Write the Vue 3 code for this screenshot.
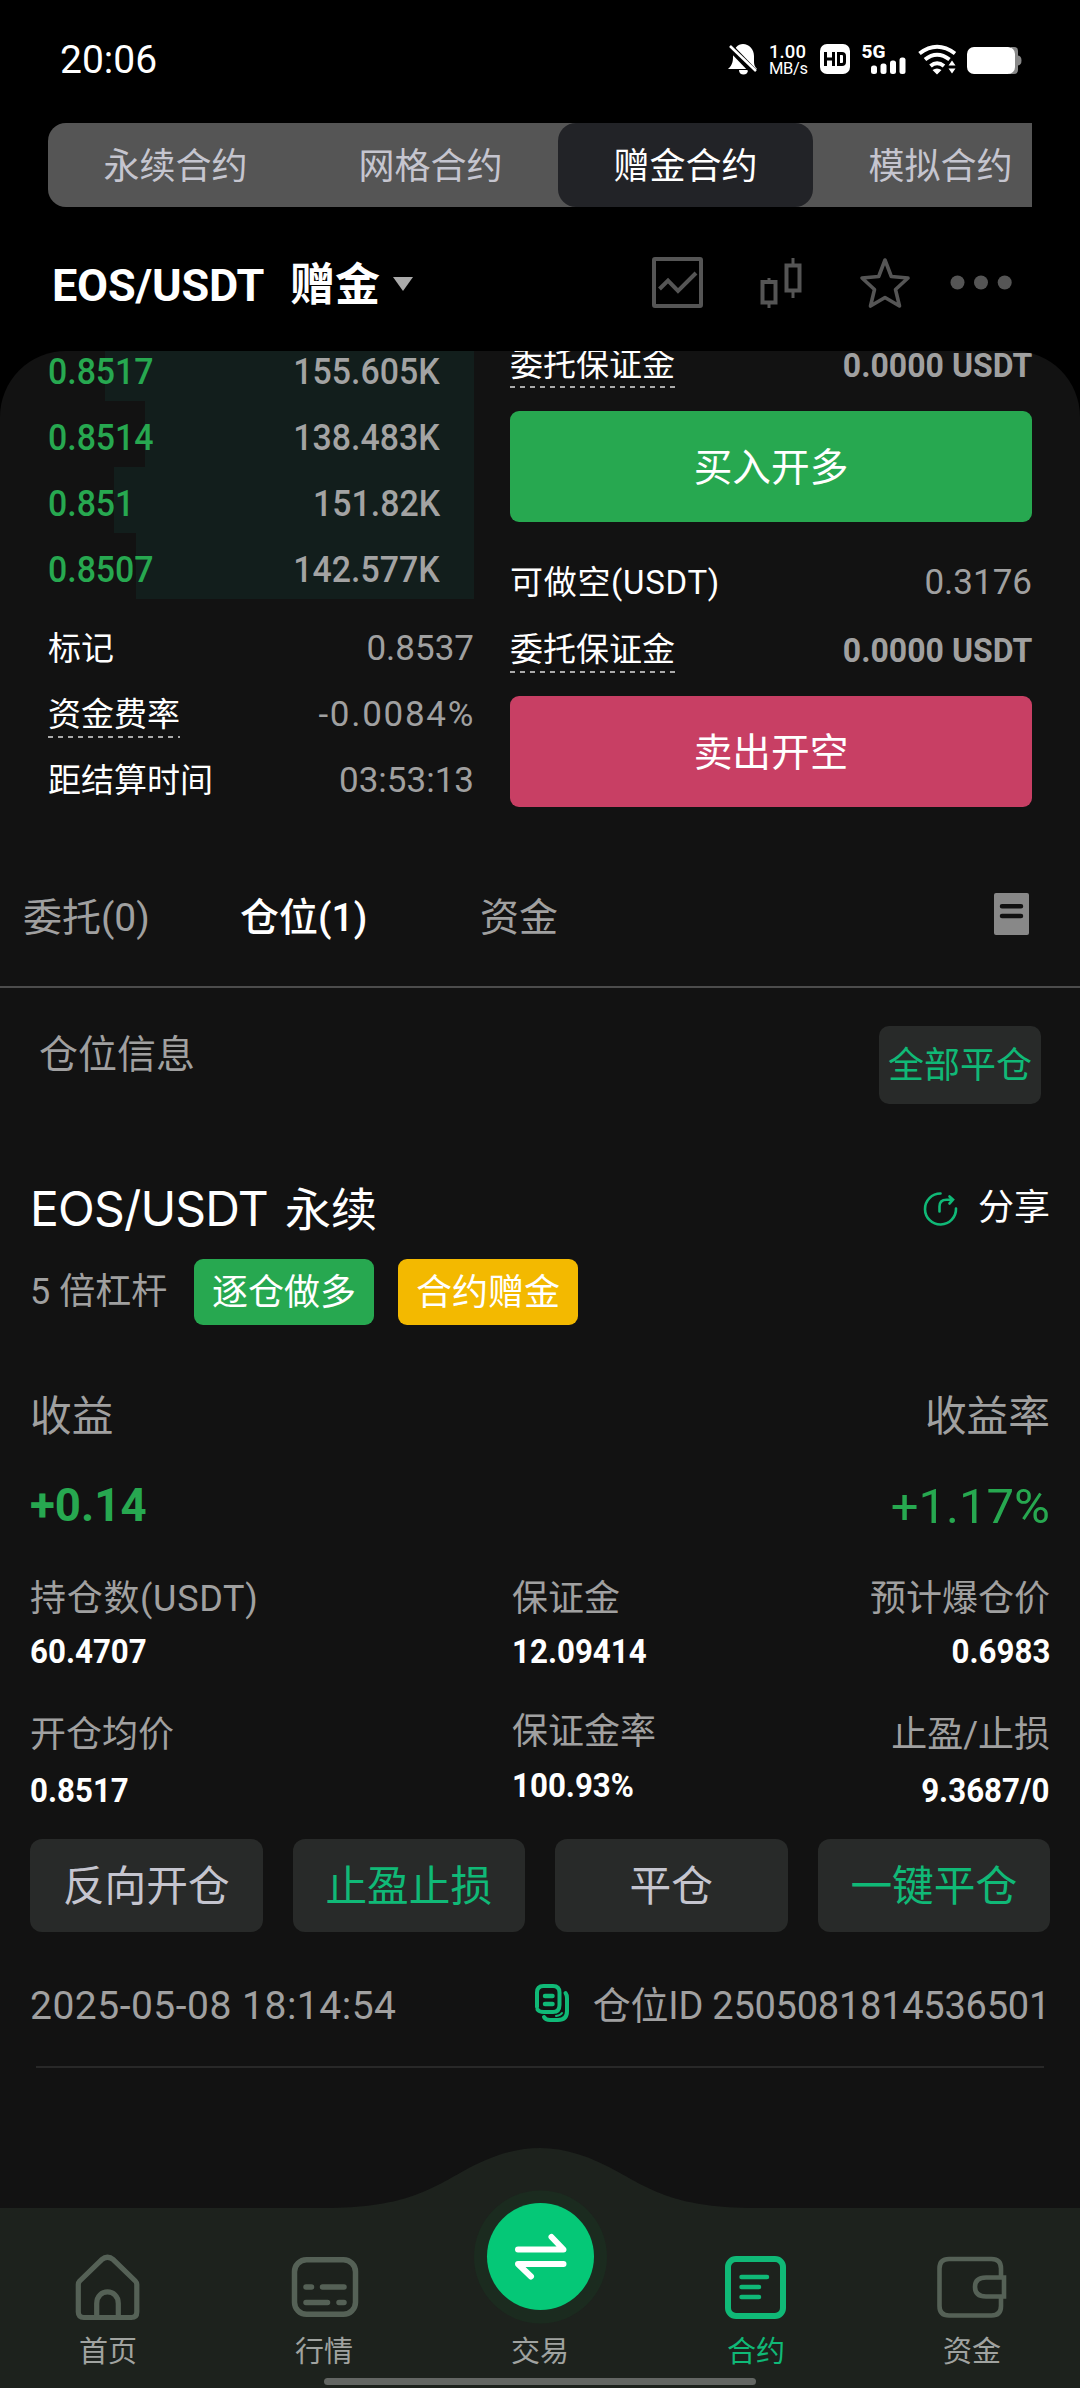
<script setup>
const modes = ['永续合约', '网格合约', '赠金合约', '模拟合约']

const bids = [
  { price: '0.8517', amount: '155.605K', depth: 369 },
  { price: '0.8514', amount: '138.483K', depth: 329 },
  { price: '0.851', amount: '151.82K', depth: 360 },
  { price: '0.8507', amount: '142.577K', depth: 338 },
]

const actions = [
  { label: '反向开仓', accent: false },
  { label: '止盈止损', accent: true },
  { label: '平仓', accent: false },
  { label: '一键平仓', accent: true },
]
</script>

<template>
  <div class="screen">
    <header class="status">
      <span class="clock">20:06</span>
      <svg class="status-icons" width="300" height="40" viewBox="0 0 300 40" fill="#fff">
        <path d="M4 27 C6 24 7 22 7 17 C7 8 12 4 17 4 C23 4 28 9 28 16 L28 22 C28 25 29 27 31 29 L2 29 Z M13 30 H22 C22 33 20 34.500 17.500 34.500 C15 34.500 13 33 13 30 Z" />
        <path d="M2 5 L29 33" stroke="#000" stroke-width="7" />
        <path d="M4 6 L30 31" stroke="#fff" stroke-width="2.600" />
        <text x="43" y="17.500" font-size="18.500" font-weight="500" textLength="37">1.00</text>
        <text x="43" y="34" font-size="16.500" textLength="39">MB/s</text>
        <rect x="94" y="4" width="30" height="30" rx="7" />
        <path d="M99.500 12 V26 M107.500 12 V26 M99.500 19 H107.500 M112.500 13.500 V24.500 H116 Q118.500 24.500 118.500 22 V16 Q118.500 13.500 116 13.500 Z" fill="none" stroke="#000" stroke-width="3" />
        <text x="135.500" y="18" font-size="19" font-weight="800" textLength="24">5G</text>
        <rect x="145" y="25.500" width="6" height="8.500" rx="2.500" />
        <rect x="154.500" y="23.500" width="6" height="10.500" rx="2.500" />
        <rect x="164" y="20.500" width="6" height="13.500" rx="2.500" />
        <rect x="173.500" y="17.500" width="6" height="16.500" rx="2.500" />
        <g fill="none" stroke="#fff" stroke-width="4">
          <path d="M193.500 13.500 Q211 0 229 13.500" />
          <path d="M199 19.500 Q211 10 223.500 19.500" />
          <path d="M204.500 26 Q211 20.500 218 26" />
        </g>
        <path d="M206.500 30 Q211 27 215.500 30 L211 34.500 Z M226 20.500 L229.500 25.500 H222.500 Z M226 33.500 L229.500 28.500 H222.500 Z" />
        <path d="M285 7 h3 q4 0 4 4 v4.500 q3.500 .5 3.500 5 t-3.500 5 V30 q0 4-4 4 h-5 Z" fill="#888" />
        <rect x="241" y="7" width="48" height="27" rx="7" />
      </svg>
    </header>

    <nav class="modes">
      <span v-for="(m, i) in modes" :key="m" class="mode" :class="{ on: i === 2 }">{{ m }}</span>
    </nav>

    <div class="pair">
      <span class="pair-name">EOS/USDT</span>
      <b class="pair-tag">赠金</b>
      <i class="caret"></i>
      <svg class="tools" width="364" height="54" viewBox="0 0 364 54" fill="none" stroke="#555" stroke-width="4">
        <rect x="2" y="3" width="47" height="47" rx="1" />
        <path d="M7.500 33 L16 24.500 L26 35 L44 17" />
        <rect x="110.500" y="26" width="13" height="20.500" />
        <path d="M117 22 V26 M117 46 V52" stroke-width="3" />
        <rect x="134.500" y="9.500" width="13" height="25" />
        <path d="M141 2 V9 M141 35 V42" stroke-width="3" />
        <path d="M233 4 L239.300 20.500 L256 22 L243.500 33.500 L247.500 50 L233 41.500 L218.500 50 L222.500 33.500 L210 22 L226.700 20.500 Z" stroke-width="3.600" stroke-linejoin="round" />
        <g fill="#555" stroke="none">
          <circle cx="305.500" cy="26.500" r="7" />
          <circle cx="329" cy="26.500" r="7" />
          <circle cx="352.700" cy="26.500" r="7" />
        </g>
      </svg>
    </div>

    <main class="panel">
      <section class="trade">
        <div class="book">
          <div v-for="b in bids" :key="b.price" class="bid">
            <i class="depth" :style="{ width: b.depth + 'px' }"></i>
            <span class="din price">{{ b.price }}</span>
            <span class="din amount">{{ b.amount }}</span>
          </div>
          <dl class="facts">
            <div><dt>标记</dt><dd>0.8537</dd></div>
            <div><dt class="dashed">资金费率</dt><dd class="rate">-0.0084%</dd></div>
            <div><dt>距结算时间</dt><dd>03:53:13</dd></div>
          </dl>
        </div>

        <div class="order">
          <div class="line first"><span class="dashed">委托保证金</span><b class="din usdt">0.0000 USDT</b></div>
          <button class="cta buy">买入开多</button>
          <div class="line avail"><span class="wide">可做空(USDT)</span><span class="num">0.3176</span></div>
          <div class="line margin"><span class="dashed">委托保证金</span><b class="din usdt">0.0000 USDT</b></div>
          <button class="cta sell">卖出开空</button>
        </div>
      </section>

      <nav class="tabs">
        <span class="tab t1">委托(0)</span>
        <span class="tab t2 on">仓位(1)</span>
        <span class="tab t3">资金</span>
        <svg class="records" width="35" height="42" viewBox="0 0 35 42">
          <rect width="35" height="42" rx="2" fill="#888" />
          <path d="M8 13.300 H27 M8 23 H27" stroke="#121212" stroke-width="4.500" stroke-linecap="round" />
        </svg>
      </nav>

      <div class="info">
        <span>仓位信息</span>
        <button class="close-all">全部平仓</button>
      </div>

      <article class="position">
        <div class="title">
          <h2><span class="symbol">EOS/USDT</span>永续</h2>
          <span class="share">
            <svg width="36" height="36" viewBox="0 0 36 36" fill="none" stroke="#10b977" stroke-width="2.600" stroke-linecap="round">
              <path d="M17.500 2.500 A15.500 15.500 0 1 0 33 17.500" />
              <path d="M16.500 20.500 V15.500 Q16.500 8.700 23.500 8.700 H29 M26.500 5.500 L30 8.700 L26.500 12.500" />
            </svg>
            分享
          </span>
        </div>

        <div class="tags">
          <span class="lever">5 倍杠杆</span>
          <span class="tag green">逐仓做多</span>
          <span class="tag gold">合约赠金</span>
        </div>

        <div class="profit-head"><span>收益</span><span>收益率</span></div>
        <div class="profit"><b class="din gain">+0.14</b><span class="gain-rate">+1.17%</span></div>

        <div class="stats">
          <div class="stat"><span class="wide">持仓数(USDT)</span><b class="din">60.4707</b></div>
          <div class="stat mid"><span>保证金</span><b class="din">12.09414</b></div>
          <div class="stat end"><span>预计爆仓价</span><b class="din">0.6983</b></div>
        </div>
        <div class="stats second">
          <div class="stat"><span>开仓均价</span><b class="din">0.8517</b></div>
          <div class="stat mid up"><span>保证金率</span><b class="din">100.93%</b></div>
          <div class="stat end"><span>止盈/止损</span><b class="din">9.3687/0</b></div>
        </div>

        <div class="actions">
          <button v-for="a in actions" :key="a.label" :class="{ accent: a.accent }">{{ a.label }}</button>
        </div>

        <div class="meta">
          <span class="date">2025-05-08 18:14:54</span>
          <svg class="copy" width="36" height="40" viewBox="0 0 36 40" fill="none" stroke="#10b977" stroke-width="4" stroke-linecap="round">
            <path d="M3 24 V9.500 Q3 3 9.500 3 H19 Q25.500 3 25.500 9.500 V22 Q25.500 29 19 29 H10 Q5 29 3.500 26.500" />
            <path d="M31.500 10 Q33 12 33 15 V28 Q33 37 24 37 H16 Q11.500 37 10 34" />
            <path d="M28 30 Q26.500 32.500 22 33" stroke-width="2" />
            <path d="M11 13 H18.500 M11 21 H18.500" stroke-width="4.500" />
          </svg>
          <span class="pid">仓位ID 2505081814536501</span>
        </div>
      </article>
    </main>

    <footer class="dock">
      <svg class="dock-bg" width="1080" height="240" viewBox="0 0 1080 240">
        <path d="M0 60 H325 C400 60 428 43 460 25 C490 8 515 0 540 0 C565 0 590 8 620 25 C652 43 680 60 755 60 H1080 V240 H0 Z" fill="#1d221d" />
        <circle cx="540.500" cy="109" r="66.500" fill="#1b2b1f" />
        <circle cx="540.500" cy="108.500" r="53.500" fill="#05c877" />
        <path d="M518 101.500 H563.500 L551.500 89 M563.500 116 H518 L531 128.500" fill="none" stroke="#fff" stroke-width="6" stroke-linecap="round" stroke-linejoin="round" />
      </svg>
      <div class="dock-items">
        <span class="item">
          <svg width="72" height="72" viewBox="0 0 72 72" fill="none" stroke="#556156" stroke-width="5.200" stroke-linejoin="round">
            <path d="M6.300 32.500 Q6.300 30.500 7.700 29 L29.500 7.800 Q35.500 2.800 41.500 7.800 L63.300 29 Q64.800 30.500 64.800 32.500 V60 Q64.800 65.500 59.300 65.500 H11.800 Q6.300 65.500 6.300 60 Z" />
            <path d="M24.700 65 V51.500 C24.700 36 46.300 36 46.300 51.500 V65" />
          </svg>
          首页
        </span>
        <span class="item">
          <svg width="72" height="72" viewBox="0 0 72 72" fill="none" stroke="#556156" stroke-width="5.500" stroke-linecap="round">
            <rect x="6.500" y="7.700" width="61" height="54.500" rx="12" />
            <path d="M18 35 H23.500 M34.500 35 H56 M18 50.500 H39.500 M51 50.500 H56" />
          </svg>
          行情
        </span>
        <span class="item"><i class="gap"></i>交易</span>
        <span class="item on">
          <svg width="72" height="72" viewBox="0 0 72 72" fill="none" stroke="#10b977" stroke-width="6">
            <rect x="8" y="7" width="55" height="57" rx="8" />
            <path d="M21.500 25 H47 M21.500 35 H39 M21.500 45 H39" stroke-width="4.500" stroke-linecap="round" />
          </svg>
          合约
        </span>
        <span class="item">
          <svg width="72" height="72" viewBox="0 0 72 72" fill="none" stroke="#556156" stroke-width="4.600">
            <path d="M65 24.500 V16.500 Q65 7 55.500 7 H13 Q3.500 7 3.500 16.500 V54 Q3.500 63.500 13 63.500 H55.500 Q65 63.500 65 54 V45" />
            <path d="M68 25.500 H50 Q39 25.500 39 35 Q39 44.500 50 44.500 H68 Z" />
          </svg>
          资金
        </span>
      </div>
      <i class="handle"></i>
    </footer>
  </div>
</template>

<style>
body {
  background: #000;
}
</style>

<style scoped>
.screen {
  position: relative;
  display: flex;
  flex-direction: column;
  width: 1080px;
  height: 2388px;
  overflow: hidden;
  background: #000;
  color: #fff;
  font-family: Roboto, "Noto Sans CJK SC", sans-serif;
  font-size: 36px;
  line-height: 1.2;
  white-space: nowrap;
}
i, b, dl, dt, dd, h2 {
  margin: 0;
  font-style: normal;
}
svg {
  display: block;
  flex: none;
}
button {
  margin: 0;
  padding: 4px 0 0;
  border: 0;
  color: #fff;
  font: inherit;
}
.din {
  display: inline-block;
  transform: scaleX(0.94);
  transform-origin: left center;
}
.wide {
  letter-spacing: 0.7px;
}

.status {
  display: flex;
  justify-content: space-between;
  align-items: center;
  height: 123px;
  padding: 0 54px 0 60px;
  box-sizing: border-box;
}
.clock {
  margin-top: -3px;
  font-size: 39px;
}
.status-icons {
  margin-top: -3px;
}

.modes {
  display: flex;
  height: 84px;
  margin: 0 48px;
  overflow: hidden;
  border-radius: 18px 0 0 18px;
  background: #555;
}
.mode {
  flex: none;
  width: 255px;
  line-height: 89px;
  text-align: center;
  color: #c5c5cf;
}
.mode.on {
  border-radius: 18px;
  background: #222327;
  color: #fff;
}

.pair {
  display: flex;
  align-items: center;
  height: 144px;
  padding: 0 64px 0 52px;
}
.pair-name {
  width: 238px;
  margin-top: 13px;
  font-size: 45px;
  font-weight: 700;
  letter-spacing: -0.2px;
}
.pair-tag {
  margin-top: 14px;
  font-size: 45px;
}
.caret {
  margin: 9px 0 0 13px;
  border: 10px solid transparent;
  border-top: 14px solid #aaa;
  border-bottom: 0;
}
.tools {
  margin: 7px 0 0 auto;
}

.panel {
  height: 2037px;
  overflow: hidden;
  border-radius: 66px 66px 0 0;
  background: #121212;
}
.trade {
  display: flex;
  justify-content: space-between;
  height: 519px;
  padding: 0 48px;
}
.book {
  width: 426px;
  margin-top: -16px;
}
.bid {
  position: relative;
  display: flex;
  align-items: center;
  justify-content: space-between;
  height: 66px;
  padding-top: 7px;
  box-sizing: border-box;
  line-height: 36px;
}
.depth {
  position: absolute;
  top: 0;
  right: 0;
  height: 100%;
  background: #121e1c;
}
.price {
  position: relative;
  color: #27a850;
  font-weight: 500;
}
.amount {
  position: relative;
  margin-right: 34px;
  transform-origin: right center;
  color: #a3a3a3;
  font-weight: 500;
}
.facts {
  margin-top: 17px;
  font-size: 33px;
}
.facts div {
  display: flex;
  align-items: center;
  justify-content: space-between;
  height: 66px;
}
.facts dd {
  color: #a0a0a0;
  font-size: 35px;
}
.facts .rate {
  letter-spacing: 1.7px;
  margin-right: -1px;
}
.dashed {
  position: relative;
}
.dashed::after {
  content: "";
  position: absolute;
  left: 0;
  right: 0;
  bottom: -3px;
  height: 2px;
  background: repeating-linear-gradient(90deg, #aaa 0 5px, transparent 5px 10px);
}
.order {
  display: flex;
  flex-direction: column;
  width: 522px;
  font-size: 33px;
}
.line {
  display: flex;
  align-items: center;
  justify-content: space-between;
  height: 60px;
}
.line.first {
  margin: -16px 0 16px;
}
.line.avail {
  margin-top: 31px;
}
.line.margin {
  margin: 7px 0 16px;
}
.usdt {
  transform: scaleX(0.97);
  transform-origin: right center;
  line-height: 33px;
  color: #a0a0a0;
}
.num {
  color: #a0a0a0;
  font-size: 35px;
}
.cta {
  height: 111px;
  border-radius: 9px;
  font-size: 38.700px;
}
.buy {
  background: #27a850;
}
.sell {
  background: #c83f64;
}

.tabs {
  position: relative;
  display: flex;
  align-items: center;
  height: 116px;
  padding: 0 51px 0 23px;
  border-bottom: 2px solid #4c4c4c;
  color: #a0a0a0;
  font-size: 39px;
}
.t1 {
  width: 217px;
}
.t2 {
  width: 240px;
}
.tab.on {
  color: #fff;
  font-weight: 500;
}
.records {
  margin: -28px 0 0 auto;
}
.tab {
  margin-top: -20px;
}

.info {
  display: flex;
  justify-content: space-between;
  height: 155px;
  padding: 38px 39px 0 39px;
  box-sizing: border-box;
  color: #a0a0a0;
  font-size: 39px;
}
.info span {
  margin-top: 6px;
}
.close-all {
  width: 162px;
  height: 78px;
  border-radius: 10px;
  background: #282a29;
  color: #10b977;
  font-size: 36px;
}

.position {
  padding: 0 30px;
}
.title {
  display: flex;
  align-items: center;
  justify-content: space-between;
  height: 70px;
  margin-top: 31px;
}
h2 {
  font-size: 46px;
  font-weight: 400;
}
.symbol {
  display: inline-block;
  width: 255px;
  font-family: Inter, sans-serif;
  font-size: 48px;
  letter-spacing: -0.8px;
}
.share {
  display: flex;
  align-items: center;
  gap: 19px;
}
.tags {
  display: flex;
  align-items: center;
  height: 66px;
  margin-top: 15px;
}
.lever {
  width: 164px;
  padding-top: 2px;
  color: #a0a0a0;
}
.tag {
  width: 180px;
  height: 66px;
  margin-right: 24px;
  border-radius: 9px;
  line-height: 69px;
  text-align: center;
}
.green {
  background: #27a850;
}
.gold {
  background: #f3b900;
}
.profit-head {
  display: flex;
  justify-content: space-between;
  margin-top: 67px;
  line-height: 50px;
  color: #a0a0a0;
  font-size: 41.700px;
}
.profit {
  display: flex;
  align-items: center;
  justify-content: space-between;
  height: 60px;
  margin-top: 35px;
  color: #27a850;
}
.gain {
  margin-top: -4px;
  font-size: 47px;
  transform: scaleX(0.97);
}
.gain-rate {
  font-size: 49px;
}
.stats {
  display: flex;
  height: 110px;
  margin-top: 37px;
}
.second {
  margin-top: 26px;
}
.stat {
  display: flex;
  flex-direction: column;
  align-items: flex-start;
  gap: 5px;
  width: 482px;
}
.second .stat {
  gap: 8px;
}
.stat span {
  line-height: 50px;
  color: #a0a0a0;
}
.stat b {
  line-height: 44px;
  font-size: 34px;
  transform: scaleX(0.92);
}
.mid {
  width: 238px;
}
.end {
  width: 300px;
  align-items: flex-end;
}
.end b {
  transform-origin: right center;
}
.second .up {
  gap: 6px;
  margin-top: -3px;
}
.actions {
  display: grid;
  grid-template-columns: repeat(4, 1fr);
  gap: 30px;
  height: 93px;
  margin-top: 19px;
}
.actions button {
  border-radius: 12px;
  background: #282a29;
  color: #c5c5cf;
  font-size: 41.700px;
}
.actions .accent {
  color: #10b977;
}
.meta {
  display: flex;
  align-items: center;
  height: 134px;
  margin: 0 6px;
  border-bottom: 2px solid #282828;
  color: #a0a0a0;
}
.date {
  margin: 15px 0 0 -6px;
  font-size: 39px;
  letter-spacing: 0.5px;
}
.copy {
  margin: 8px 0 0 auto;
}
.pid {
  margin: 15px -6px 0 23px;
  font-size: 38px;
  letter-spacing: -0.25px;
}

.dock {
  position: absolute;
  left: 0;
  bottom: 0;
  width: 1080px;
  height: 240px;
}
.dock-bg {
  position: absolute;
  inset: 0;
}
.dock-items {
  position: relative;
  display: flex;
  padding-top: 104px;
}
.item {
  display: flex;
  flex-direction: column;
  align-items: center;
  width: 216px;
  gap: 11px;
  color: #a0a3a0;
  font-size: 29px;
}
.item.on {
  color: #10b977;
}
.gap {
  height: 72px;
}
.handle {
  position: absolute;
  left: 324px;
  bottom: 3px;
  width: 432px;
  height: 7px;
  border-radius: 4px;
  background: #636663;
}
</style>
